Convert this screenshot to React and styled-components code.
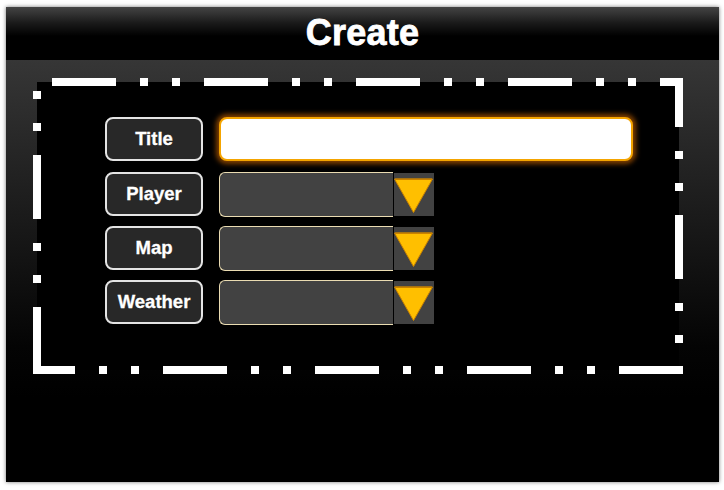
import React from "react";
import styled, { createGlobalStyle } from "styled-components";

const Global = createGlobalStyle`
  html, body { margin: 0; padding: 0; background: #ffffff; }
  body { font-family: "Liberation Sans", Arial, sans-serif; }
`;

const Page = styled.div`
  width: 724px;
  height: 490px;
  padding: 7px 0 0 6px;
  box-sizing: border-box;
`;

const Panel = styled.div`
  width: 713px;
  height: 475px;
  display: flex;
  flex-direction: column;
  box-shadow: 0 0 4px rgba(0, 0, 0, 0.55);
`;

const Header = styled.header`
  height: 53px;
  flex: none;
  display: flex;
  align-items: center;
  justify-content: center;
  background: linear-gradient(to bottom, #444444 0%, #1a1a1a 30%, #000000 55%, #000000 100%);
  color: #ffffff;
  font-family: "Liberation Sans", Arial, sans-serif;
  font-weight: 700;
  font-size: 36px;
  letter-spacing: 0.2px;
  -webkit-text-stroke: 0.8px #ffffff;
  padding-bottom: 1px;
  box-sizing: border-box;
`;

const Body = styled.main`
  flex: 1;
  padding: 22px 0 0 31px;
  background: linear-gradient(to bottom, #363636 0%, #1c1c1c 35%, #040404 68%, #000000 80%, #000000 100%);
`;

const Frame = styled.section`
  position: relative;
  width: 642px;
  height: 288px;
  background: #000000;
  box-sizing: border-box;
  padding: 35px 0 0 68px;
  display: flex;
  flex-direction: column;
`;

const FrameBorder = styled.svg`
  position: absolute;
  left: -4px;
  top: -4px;
  width: 650px;
  height: 296px;
  pointer-events: none;
`;

const Row = styled.div`
  display: flex;
  align-items: center;
  gap: 16px;
  height: 44px;
  margin-bottom: ${(p) => (p.$first ? "11px" : "10px")};
`;

const Label = styled.div`
  width: 98px;
  height: 44px;
  box-sizing: border-box;
  border: 2px solid #e4e4e4;
  border-radius: 8px;
  background: #282828;
  color: #ffffff;
  font-family: "Liberation Sans", Arial, sans-serif;
  font-weight: 700;
  font-size: 18.5px;
  -webkit-text-stroke: 0.3px #ffffff;
  display: flex;
  align-items: center;
  justify-content: center;
`;

const TextInput = styled.input`
  width: 414px;
  height: 44px;
  box-sizing: border-box;
  border: 2px solid #f4a400;
  border-radius: 8px;
  background: #ffffff;
  outline: none;
  box-shadow: 0 0 5px 3px rgba(200, 100, 0, 0.65);
  padding: 0 8px;
  font-family: "Liberation Sans", Arial, sans-serif;
  font-size: 16px;
`;

const Combo = styled.div`
  display: flex;
  align-items: center;
  height: 45px;
`;

const ComboField = styled.div`
  width: 174px;
  height: 45px;
  box-sizing: border-box;
  background: #424242;
  border: 1px solid #eadcb2;
  border-right: none;
  border-radius: 6px 0 0 6px;
`;

const ComboButton = styled.div`
  width: 40px;
  height: 43px;
  margin-left: 1px;
  background: #424242;
  display: flex;
  align-items: flex-start;
  justify-content: flex-start;
  padding-top: 5px;
  box-sizing: border-box;
  position: relative;
  &::before {
    content: "";
    position: absolute;
    left: -1px;
    top: 0;
    width: 1px;
    height: 44px;
    background: #000000;
  }
`;

const Arrow = () => (
  <svg width="39" height="35" viewBox="0 0 39 35">
    <polygon points="0.5,1 38.5,1 19.5,34.5" fill="#ffbf00" stroke="#c98200" strokeWidth="1" />
    <line x1="1" y1="1.2" x2="38" y2="1.2" stroke="#c98200" strokeWidth="1.6" />
  </svg>
);

const Select = () => (
  <Combo>
    <ComboField />
    <ComboButton>
      <Arrow />
    </ComboButton>
  </Combo>
);

const dash = "64 24 8 24 8 24";

export default function App() {
  return (
    <Page>
      <Global />
      <Panel>
        <Header>Create</Header>
        <Body>
          <Frame>
            <FrameBorder viewBox="0 0 650 296">
              <g stroke="#ffffff" strokeWidth="8" fill="none" strokeDasharray={dash}>
                <path d="M0 4 H650" strokeDashoffset="133" />
                <path d="M646 0 V296" strokeDashoffset="15" />
                <path d="M650 292 H0" strokeDashoffset="0" />
                <path d="M4 0 V292" strokeDashoffset="75" />
              </g>
            </FrameBorder>
            <Row $first>
              <Label>Title</Label>
              <TextInput type="text" />
            </Row>
            <Row>
              <Label>Player</Label>
              <Select />
            </Row>
            <Row>
              <Label>Map</Label>
              <Select />
            </Row>
            <Row>
              <Label>Weather</Label>
              <Select />
            </Row>
          </Frame>
        </Body>
      </Panel>
    </Page>
  );
}
